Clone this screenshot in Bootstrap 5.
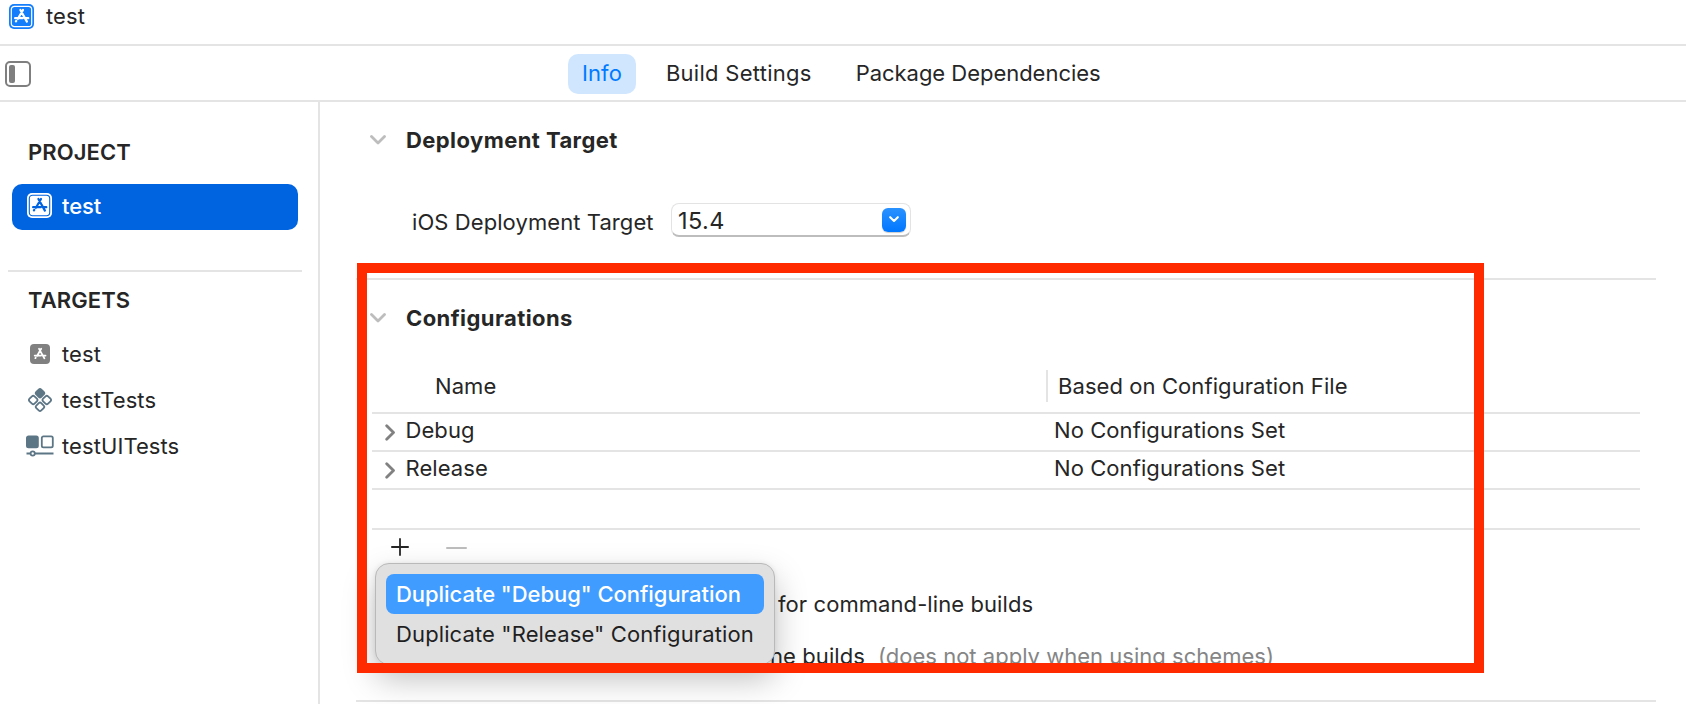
<!DOCTYPE html>
<html lang="en">
<head>
<meta charset="utf-8">
<title>test</title>
<link href="https://cdn.jsdelivr.net/npm/bootstrap@5.3.0/dist/css/bootstrap.min.css" rel="stylesheet">
<style>
  :root { --rule: #e4e4e4; --ink: #262626; }
  body { font: 400 22px/28px Inter, "Liberation Sans", sans-serif; letter-spacing: .08px; color: var(--ink); background: #fff; height: 704px; overflow: hidden; white-space: nowrap; }
  svg { display: block; flex: none; }
  .titlebar { height: 46px; padding: 0 0 12px 9px; border-bottom: 2px solid var(--rule); gap: 12px; }
  .tabstrip { height: 56px; border-bottom: 2px solid var(--rule); padding: 2px 0 0 5px; }
  .tabstrip .nav { margin-left: 537px; }
  .tabstrip .nav-link { padding: 5px 14px 7px; height: 40px; border-radius: 10px; color: var(--ink); line-height: 28px; }
  .tabstrip .nav-link.active { background: #d0e6ff; color: #007aff; }
  .sidebar { width: 320px; height: 602px; border-right: 2px solid var(--rule); flex: none; }
  .group-label { font-weight: 600; padding-left: 28px; height: 28px; }
  .side-item { height: 46px; margin: 0 20px 0 12px; padding-left: 13.5px; }
  .side-item .glyph { width: 28px; margin-right: 8.5px; display: flex; justify-content: center; }
  .side-item.selected { background: #0064e1; color: #fff; font-weight: 500; letter-spacing: -.1px; border-radius: 10px; padding-bottom: 3px; }
  .side-rule { height: 2px; background: var(--rule); margin: 40px 16px 0 8px; }
  .editor { padding-left: 36px; width: 1366px; }
  .section-rule { height: 2px; width: 1300px; background: var(--rule); }
  .section-head { height: 76px; padding-left: 14px; font-weight: 700; letter-spacing: .42px; }
  .section-head svg { margin-right: 20px; }
  .combo { width: 240px; height: 34px; margin-top: -4px; border-radius: 8px; border: 1px solid #e3e3e3; border-bottom: 2px solid #bdbdbd; padding: 2px 4px 0 6px; font-size: 23.5px; letter-spacing: .45px; }
  .combo-btn { width: 24px; height: 24px; border-radius: 6px; background: linear-gradient(#2a92ff, #0077ff); margin-top: -2px; box-shadow: 0 1px 1px #0003; }
  .config-table { width: 1268px; margin-left: 16px; }
  .config-row { height: 38px; border-bottom: 2px solid var(--rule); padding-bottom: 4px; }
  .config-row.head-row { height: 58px; padding: 4px 0 0; }
  .config-row.blank-row { height: 40px; }
  .name-col { width: 674px; flex: none; padding-left: 12.5px; }
  .head-row .name-col { padding-left: 63px; }
  .name-col svg { margin: 4px 10px 0 0; }
  .file-col { padding-left: 8px; }
  .head-row .file-col { height: 32px; border-left: 2px solid var(--rule); padding-left: 10px; line-height: 32px; }
  .toolrow { height: 34px; padding: 0 0 0 35px; gap: 37px; }
  .build-row { height: 80px; padding-left: 422px; }
  .clipped-row { height: 24px; padding-left: 414px; }
  .hint { color: #858585; margin-left: 13px; letter-spacing: .02px; }
  .popup { left: 375px; top: 563px; width: 400px; height: 102px; background: #e0e0e0; border: 1px solid #b9b9b9; border-radius: 14px; padding: 10px; box-shadow: 0 14px 32px rgba(0,0,0,.25), 0 0 5px rgba(0,0,0,.08); }
  .popup .dropdown-item { padding: 6px 10px; height: 40px; border-radius: 8px; color: #1f1f1f; letter-spacing: .12px; font-size: 22px; }
  .popup .dropdown-item.active { background: #419cff; color: #fff; font-weight: 500; letter-spacing: -.04px; }
  .callout { left: 357px; top: 263px; width: 1127px; height: 410px; border: 10px solid #ff2a00; pointer-events: none; }
</style>
</head>
<body>
<svg width="0" height="0" class="position-absolute">
  <defs>
    <g id="app-a" fill="none" stroke-linecap="round">
      <path d="M11.4 6 L17.9 17.6 M14 6 L8.9 14.800 M6.100 14.2 H13.800 M17 14.2 H19.3 M6.9 17.400 L7.3 16.800"/>
    </g>
    <path id="chev-down" d="M1.5 1.5 L8 8 L14.500 1.5" fill="none" stroke="#bdbdbd" stroke-width="2.8" stroke-linecap="round" stroke-linejoin="round"/>
    <path id="chev-right" d="M1.7 1.7 L8.500 8.500 L1.7 15.300" fill="none" stroke="#818181" stroke-width="2.8" stroke-linecap="round" stroke-linejoin="round"/>
  </defs>
</svg>

<header class="titlebar d-flex align-items-center">
  <svg width="25" height="25" viewBox="0 0 25 25"><rect width="25" height="25" rx="5" fill="#147efb"/><rect x="2.300" y="2.300" width="20.400" height="20.400" rx="3.200" fill="none" stroke="#fff" stroke-width="1.200"/><use href="#app-a" stroke="#fff" stroke-width="2.200"/></svg>
  <span>test</span>
</header>

<div class="tabstrip d-flex align-items-center">
  <svg width="26" height="26" viewBox="0 0 26 26"><rect x="1" y="1" width="24" height="24" rx="4" fill="none" stroke="#7f7f7f" stroke-width="2"/><rect x="4" y="4" width="6" height="18" rx="2" fill="#7f7f7f"/></svg>
  <ul class="nav nav-pills flex-nowrap gap-3">
    <li class="nav-item"><a class="nav-link active">Info</a></li>
    <li class="nav-item"><a class="nav-link" style="letter-spacing:.27px">Build Settings</a></li>
    <li class="nav-item"><a class="nav-link" style="letter-spacing:-.03px">Package Dependencies</a></li>
  </ul>
</div>

<div class="d-flex">
  <aside class="sidebar">
    <div class="group-label" style="margin-top:36px">PROJECT</div>
    <div class="side-item selected d-flex align-items-center" style="margin-top:18px">
      <span class="glyph"><svg width="25" height="25" viewBox="0 0 25 25"><rect width="25" height="25" rx="5" fill="#fff"/><rect x="2.300" y="2.300" width="20.400" height="20.400" rx="3.200" fill="none" stroke="#0064e1" stroke-width="1.100"/><use href="#app-a" stroke="#0064e1" stroke-width="2.200"/></svg></span>test
    </div>
    <div class="side-rule"></div>
    <div class="group-label" style="margin-top:14px">TARGETS</div>
    <div class="side-item d-flex align-items-center" style="margin-top:17px">
      <span class="glyph"><svg width="20" height="20" viewBox="0 0 20 20"><rect width="20" height="20" rx="4" fill="#808080"/><use href="#app-a" stroke="#fff" stroke-width="2.200" transform="translate(-.3 -.1) scale(.82)"/></svg></span>test
    </div>
    <div class="side-item d-flex align-items-center">
      <span class="glyph"><svg width="26" height="26" viewBox="0 0 26 26" fill="none" stroke="#5d7686" stroke-width="1.800"><g transform="rotate(45 13 13)"><rect x="4.700" y="4.700" width="7" height="7" rx="1.800" fill="#5d7686"/><rect x="14.300" y="4.700" width="7" height="7" rx="1.800"/><rect x="4.700" y="14.300" width="7" height="7" rx="1.800"/><rect x="14.300" y="14.300" width="7" height="7" rx="1.800"/></g></svg></span>testTests
    </div>
    <div class="side-item d-flex align-items-center">
      <span class="glyph"><svg width="28" height="22" viewBox="0 0 28 22" fill="none" stroke="#5d7686" stroke-width="1.800"><rect x=".9" y="1.400" width="11" height="11" rx="1.600" fill="#5d7686"/><rect x="15.800" y="1.400" width="11" height="11" rx="1.600"/><path d="M.5 18.500 H4.500 M9 18.500 H27.500"/><circle cx="6.700" cy="18.500" r="2.100"/></svg></span>testUITests
    </div>
  </aside>

  <main class="editor">
    <div class="section-head d-flex align-items-center"><svg width="16" height="10"><use href="#chev-down"/></svg>Deployment Target</div>
    <div class="d-flex align-items-center" style="height:88px;padding-left:56px">
      <span style="width:259px">iOS Deployment Target</span>
      <div class="combo d-flex align-items-center justify-content-between">15.4
        <span class="combo-btn d-flex align-items-center justify-content-center"><svg width="10" height="7" viewBox="0 0 10 7"><path d="M1.200 1.200 L5 5 L8.800 1.200" fill="none" stroke="#fff" stroke-width="2.100" stroke-linecap="round" stroke-linejoin="round"/></svg></span>
      </div>
    </div>
    <div class="section-rule" style="margin-top:12px"></div>

    <div class="section-head d-flex align-items-center"><svg width="16" height="10"><use href="#chev-down"/></svg>Configurations</div>
    <div class="config-table">
      <div class="config-row head-row d-flex align-items-center"><span class="name-col">Name</span><span class="file-col">Based on Configuration File</span></div>
      <div class="config-row d-flex align-items-center"><span class="name-col d-flex align-items-center"><svg width="11" height="17"><use href="#chev-right"/></svg>Debug</span><span class="file-col">No Configurations Set</span></div>
      <div class="config-row d-flex align-items-center"><span class="name-col d-flex align-items-center"><svg width="11" height="17"><use href="#chev-right"/></svg>Release</span><span class="file-col">No Configurations Set</span></div>
      <div class="config-row blank-row"></div>
    </div>
    <div class="toolrow d-flex align-items-center">
      <svg width="18" height="18"><path d="M9 .9 V17.100 M.9 9 H17.100" stroke="#262626" stroke-width="1.800" stroke-linecap="round"/></svg>
      <svg width="21" height="4" style="margin-top:2px"><path d="M1 2 H20" stroke="#bdbdbd" stroke-width="2" stroke-linecap="round"/></svg>
    </div>
    <div class="build-row d-flex align-items-center">for command-line builds</div>
    <div class="clipped-row d-flex align-items-center">ne builds<span class="hint">(does not apply when using schemes)</span></div>
    <div class="section-rule" style="margin-top:32px"></div>
  </main>
</div>

<div class="popup position-absolute">
  <a class="dropdown-item active">Duplicate "Debug" Configuration</a>
  <a class="dropdown-item">Duplicate "Release" Configuration</a>
</div>
<div class="callout position-absolute"></div>

<script src="https://cdn.jsdelivr.net/npm/bootstrap@5.3.0/dist/js/bootstrap.bundle.min.js"></script>
</body>
</html>
